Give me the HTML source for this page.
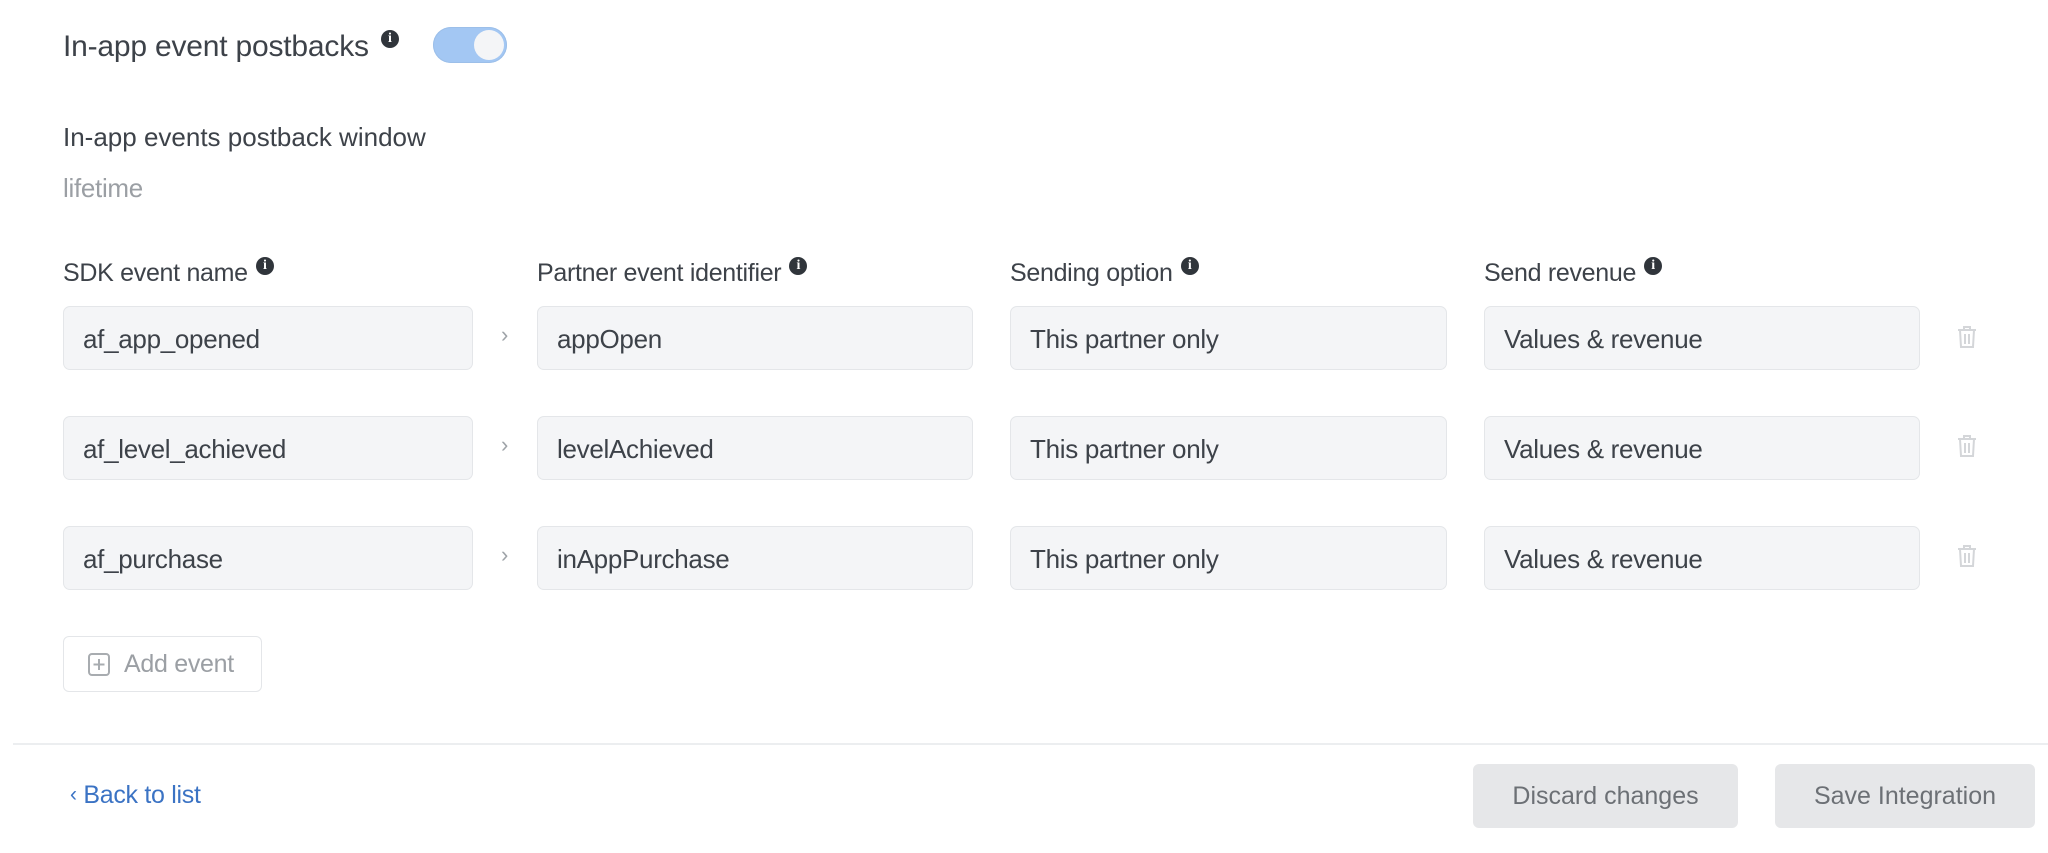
<!DOCTYPE html>
<html><head><meta charset="utf-8"><style>
body{margin:0;width:2048px;height:853px;background:#fff;font-family:"Liberation Sans",sans-serif;color:#3d4249;position:relative;overflow:hidden}
.a{position:absolute;white-space:nowrap}
.info{display:inline-block;width:18px;height:18px;border-radius:50%;background:#30353b;color:#fff;font-size:14px;font-weight:bold;text-align:center;line-height:18px;font-family:"Liberation Serif",serif;vertical-align:top;margin-left:8px}
.box{position:absolute;height:64px;background:#f4f5f7;border:1px solid #e4e6e9;border-radius:7px;box-sizing:border-box;font-size:26px;line-height:64px;padding-left:19px;color:#3d4249;letter-spacing:-0.3px}
.chev{position:absolute;color:#9ea3a8;font-size:22px}
.btn{position:absolute;background:#e6e7e9;border-radius:6px;color:#6c7075;font-size:25px;text-align:center;line-height:64px;height:64px}
.h{font-size:25px;letter-spacing:-0.3px}
</style></head><body>
<div class="a" style="left:63px;top:30px;font-size:30px;letter-spacing:-0.2px">In-app event postbacks<span class="info" style="margin-left:12px;margin-top:0px">i</span></div>
<div class="a" style="left:433px;top:27px;width:74px;height:36px;border-radius:18px;background:#a3c7f3;box-shadow:0 0 0 1px #9cbfe9 inset"><div style="position:absolute;right:3px;top:3px;width:30px;height:30px;border-radius:50%;background:#f4f5f7"></div></div>
<div class="a" style="left:63px;top:122px;font-size:26px;letter-spacing:0px">In-app events postback window</div>
<div class="a" style="left:63px;top:173px;font-size:26px;color:#9b9fa4;letter-spacing:-0.3px">lifetime</div>
<div class="a h" style="left:63px;top:259px">SDK event name<span class="info" style="margin-top:-2px">i</span></div>
<div class="a h" style="left:537px;top:259px">Partner event identifier<span class="info" style="margin-top:-2px">i</span></div>
<div class="a h" style="left:1010px;top:259px">Sending option<span class="info" style="margin-top:-2px">i</span></div>
<div class="a h" style="left:1484px;top:259px">Send revenue<span class="info" style="margin-top:-2px">i</span></div>

<div class="box" style="left:63px;top:306px;width:410px">af_app_opened</div>
<div class="chev" style="left:501px;top:322px">›</div>
<div class="box" style="left:537px;top:306px;width:436px">appOpen</div>
<div class="box" style="left:1010px;top:306px;width:437px">This partner only</div>
<div class="box" style="left:1484px;top:306px;width:436px">Values &amp; revenue</div>

<div class="box" style="left:63px;top:416px;width:410px">af_level_achieved</div>
<div class="chev" style="left:501px;top:432px">›</div>
<div class="box" style="left:537px;top:416px;width:436px">levelAchieved</div>
<div class="box" style="left:1010px;top:416px;width:437px">This partner only</div>
<div class="box" style="left:1484px;top:416px;width:436px">Values &amp; revenue</div>

<div class="box" style="left:63px;top:526px;width:410px">af_purchase</div>
<div class="chev" style="left:501px;top:542px">›</div>
<div class="box" style="left:537px;top:526px;width:436px">inAppPurchase</div>
<div class="box" style="left:1010px;top:526px;width:437px">This partner only</div>
<div class="box" style="left:1484px;top:526px;width:436px">Values &amp; revenue</div>

<svg class="a" style="left:1956px;top:325px" width="22" height="24" viewBox="0 0 22 24"><g fill="none" stroke="#d4d6d9" stroke-width="2"><path d="M2 5h18M8 5V2h6v3M4 5l1 17h12l1-17M9 9v10M13 9v10"/></g></svg>
<svg class="a" style="left:1956px;top:434px" width="22" height="24" viewBox="0 0 22 24"><g fill="none" stroke="#d4d6d9" stroke-width="2"><path d="M2 5h18M8 5V2h6v3M4 5l1 17h12l1-17M9 9v10M13 9v10"/></g></svg>
<svg class="a" style="left:1956px;top:544px" width="22" height="24" viewBox="0 0 22 24"><g fill="none" stroke="#d4d6d9" stroke-width="2"><path d="M2 5h18M8 5V2h6v3M4 5l1 17h12l1-17M9 9v10M13 9v10"/></g></svg>

<div class="a" style="left:63px;top:636px;width:199px;height:56px;border:1px solid #e4e6e9;border-radius:6px;box-sizing:border-box;font-size:25px;color:#9b9fa4;line-height:54px;letter-spacing:-0.3px">
<svg style="position:absolute;left:24px;top:16px" width="22" height="23" viewBox="0 0 22 23"><rect x="1" y="1" width="20" height="21" rx="3" fill="none" stroke="#a8acb0" stroke-width="2"/><path d="M11 6v11M5.5 11.5h11" stroke="#a8acb0" stroke-width="2"/></svg>
<span style="position:absolute;left:60px">Add event</span></div>

<div class="a" style="left:13px;top:743px;width:2035px;height:2px;background:#eceef0"></div>
<div class="a" style="left:70px;top:781px;font-size:25px;color:#3b73c4;letter-spacing:-0.3px"><span style="font-size:21px;position:relative;top:-2px">‹</span> Back to list</div>
<div class="btn" style="left:1473px;top:764px;width:265px">Discard changes</div>
<div class="btn" style="left:1775px;top:764px;width:260px">Save Integration</div>
</body></html>
